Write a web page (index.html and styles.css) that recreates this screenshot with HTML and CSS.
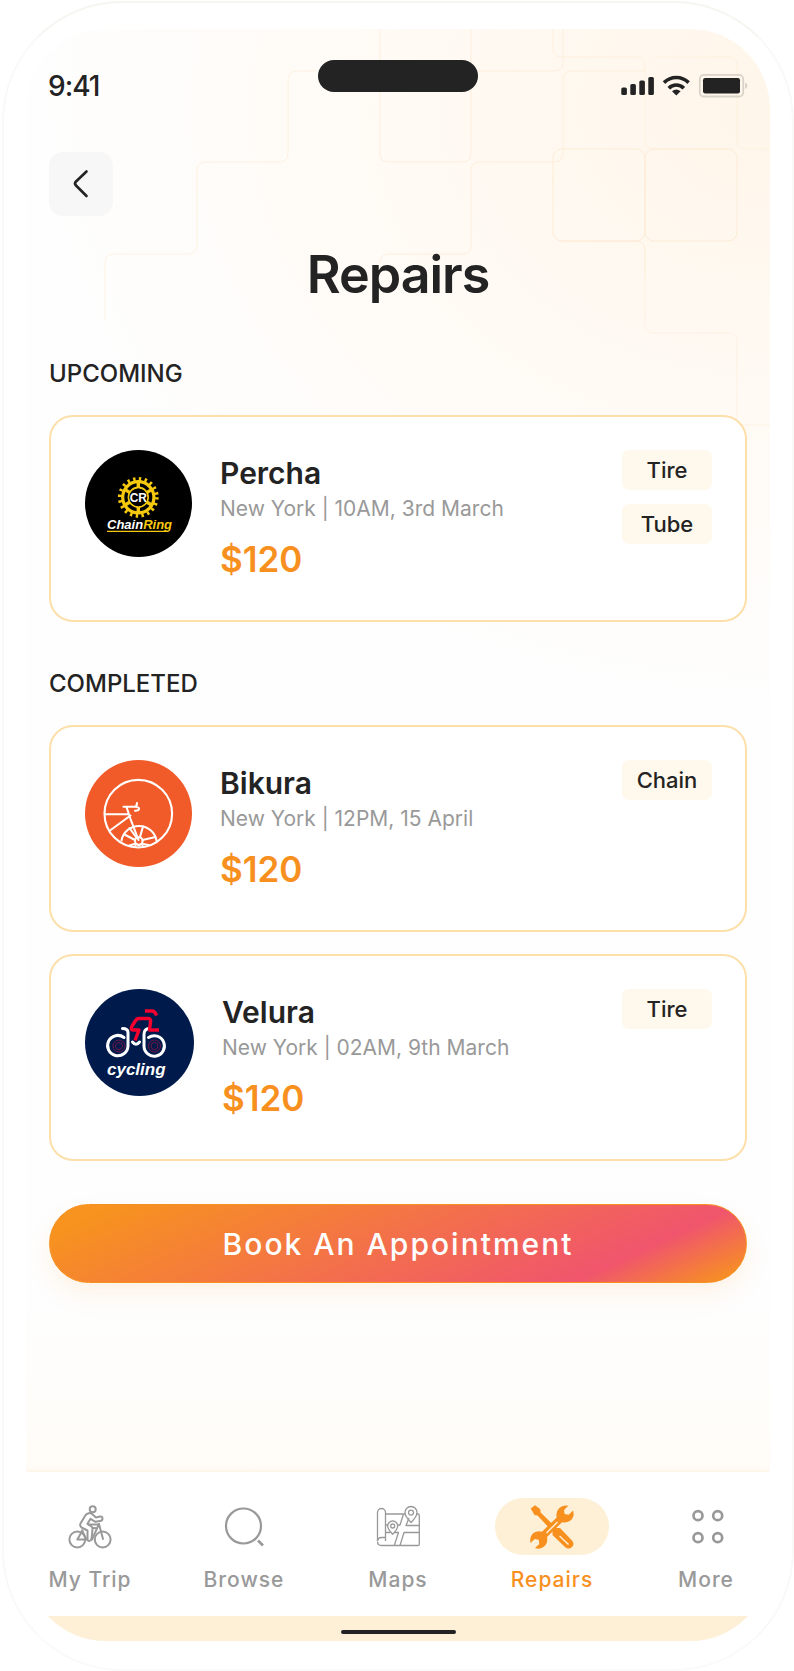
FILE: index.html
```
<!DOCTYPE html>
<html lang="en">

<head>
    <meta charset="UTF-8">
    <meta name="viewport" content="width=device-width, initial-scale=1.0">
    <title>Repairs</title>
    <link rel="stylesheet" href="styles.css">
</head>

<body>
    <div class="phone">
        <div class="screen">
            <!-- background pattern -->
            <svg class="pattern" width="744" height="420" viewBox="26 29 744 420" fill="none" stroke="#fdecd6">
                <path opacity=".7" d="M316 71H297q-9 0-9 9V153q0 9-9 9H206q-9 0-9 9V245q0 9-9 9H114q-9 0-9 9V320" />
                <path d="M380 29V153q0 9 9 9H462q9 0 9-9V29M476 71H554q9 0 9-9V29" opacity=".8" />
                <path d="M471 245V171q0-9 9-9H554q9 0 9-9V80q0-9 9-9H645M471 245q0 9-9 9H389q-9 0-9 9" opacity=".8" />
                <rect x="553" y="149" width="92" height="92" rx="9" />
                <rect x="645" y="149" width="92" height="92" rx="9" />
                <path d="M553 29V48q0 9 9 9H636q9 0 9 9V140q0 9 9 9H728M654 57H728q9 0 9 9V140q0 9 9 9H770" opacity=".7" />
                <path d="M562 241H636q9 0 9 9V278" />
                <path d="M645 278V324q0 9 9 9H728q9 0 9 9V416q0 9 9 9H770" opacity=".5" />
            </svg>

            <header class="status">
                <span class="time">9:41</span>
                <span class="notch"></span>
                <svg class="signals" width="128" height="26" viewBox="0 0 128 26" fill="#232323">
                    <rect x="1.3" y="14.5" width="5.6" height="7.5" rx="1.6" />
                    <rect x="10.3" y="11" width="5.6" height="11" rx="1.6" />
                    <rect x="19.3" y="7.5" width="5.6" height="14.5" rx="1.6" />
                    <rect x="28.3" y="4" width="5.6" height="18" rx="1.6" />
                    <path d="M44 9.6a17.5 17.5 0 0 1 24.6 0M48.8 15.2a10.4 10.4 0 0 1 15 0" fill="none" stroke="#232323" stroke-width="3.6" />
                    <path d="M52 18.2q4.3-3.4 8.6 0l-4.3 4.4z" />
                    <rect x="79.8" y="1.9" width="43.4" height="21.6" rx="4" fill="none" stroke="#d9d4ca" stroke-width="1.8" />
                    <path d="M125 9.5q2.4.8 2.4 3.2t-2.4 3.2z" fill="#d9d4ca" />
                    <rect x="83" y="5" width="37" height="15.4" rx="2.2" />
                </svg>
            </header>

            <main>
                <button type="button" class="back" aria-label="Back">
                    <svg width="64" height="64" viewBox="0 0 64 64" fill="none" stroke="#232323" stroke-width="2.6" stroke-linecap="round">
                        <path d="M37.5 19.5L27 29.500q-2 2 0 4l10.500 10.500" />
                    </svg>
                </button>

                <h1>Repairs</h1>

                <section>
                    <h2>UPCOMING</h2>
                    <article class="card">
                        <svg class="logo" viewBox="0 0 107 107">
                            <circle cx="53.5" cy="53.5" r="53.5" fill="#000" />
                            <g fill="none" stroke="#f6c90e">
                                <circle cx="53.3" cy="47.3" r="18.4" stroke-width="4" stroke-dasharray="2.4 3.38" />
                                <circle cx="53.3" cy="47.3" r="15.6" stroke-width="3.2" />
                                <circle cx="53.3" cy="47.3" r="9.8" stroke-width="1.8" />
                                <path stroke-width="3.4" d="M53.3 32v6M53.3 57v6M40 39.6l5 3M66.6 39.6l-5 3M40 55l5-3M66.6 55l-5-3" />
                            </g>
                            <circle cx="53.3" cy="47.3" r="8.9" fill="#000" />
                            <text class="cr" x="53.3" y="51.5">CR</text>
                            <text class="chainring" x="22" y="79"><tspan fill="#fff">Chain</tspan><tspan fill="#f6c90e">Ring</tspan></text>
                            <path d="M22 81.4H83" stroke="#f6c90e" stroke-width="1.4" />
                        </svg>
                        <div class="info">
                            <h3>Percha</h3>
                            <p class="when">New York | 10AM, 3rd March</p>
                            <p class="price">$120</p>
                        </div>
                        <ul class="tags">
                            <li>Tire</li>
                            <li>Tube</li>
                        </ul>
                    </article>
                </section>

                <section>
                    <h2>COMPLETED</h2>
                    <article class="card">
                        <svg class="logo" viewBox="0 0 107 107">
                            <circle cx="53.5" cy="53.5" r="53.5" fill="#f15a29" />
                            <g fill="none" stroke="#fff" stroke-width="2.1" stroke-linecap="round" stroke-linejoin="round">
                                <circle cx="53.3" cy="53.7" r="33.8" />
                                <path d="M20 54.3H44M25 70.5L45.5 55.5M41.5 47l4 12 8 21" />
                                <path d="M38.5 46.8H49.5q2.5 0 2.5-3.8M49.5 46.8q4.5 0 4.5 2t-4 2" />
                                <path d="M36.5 80.5a17.8 17.8 0 0 1 35 0" />
                                <circle cx="53.8" cy="81" r="3.8" />
                                <path d="M55 77L58 66.5M51 77L44.5 68M50 80L39.5 74.5M57.5 80L70.5 77M58 84l6 1M49.5 84l-5 1.5" />
                                <path d="M50 86l2-2 2 2 2-2 2 2" stroke-width="1.4" />
                            </g>
                        </svg>
                        <div class="info">
                            <h3>Bikura</h3>
                            <p class="when">New York | 12PM, 15 April</p>
                            <p class="price">$120</p>
                        </div>
                        <ul class="tags">
                            <li>Chain</li>
                        </ul>
                    </article>

                    <article class="card">
                        <svg class="logo logo-wide" viewBox="0 0 109 107">
                            <ellipse cx="54.5" cy="53.5" rx="54.5" ry="53.5" fill="#001a4b" />
                            <g fill="none" stroke="#7a1745" stroke-width=".9">
                                <circle cx="34" cy="57" r="6" />
                                <circle cx="34" cy="57" r="3.5" />
                                <circle cx="69.5" cy="57" r="6" />
                                <circle cx="69.5" cy="57" r="3.5" />
                            </g>
                            <g fill="none" stroke="#fff" stroke-width="3" stroke-linecap="round">
                                <path d="M39 48.5a10.2 10.2 0 1 0 4 8.500V43.500q0-4-5.500-4" />
                                <path d="M64.500 39.500q-5.500 0-5.500 6V57a10.200 10.200 0 1 0 4.500-8.500" />
                                <path d="M47.500 53q3.500 4.500 7 0" />
                            </g>
                            <g fill="none" stroke="#f5002f" stroke-width="3.4" stroke-linejoin="round">
                                <path d="M50 51.500L54 41H48q-3-.5-1-4l4-6q1-1.500 3-1.500H63q3 0 2.600 3L64.500 41H74" />
                                <path d="M60 22h7q3 0 4.500 4.500" />
                            </g>
                            <text class="cycling" x="22" y="86">cycling</text>
                        </svg>
                        <div class="info">
                            <h3>Velura</h3>
                            <p class="when">New York | 02AM, 9th March</p>
                            <p class="price">$120</p>
                        </div>
                        <ul class="tags">
                            <li>Tire</li>
                        </ul>
                    </article>
                </section>

                <button type="button" class="book">Book An Appointment</button>
            </main>

            <nav class="tabs">
                <a href="#">
                    <span class="icon">
                        <svg width="44" height="44" viewBox="0 0 44 44" fill="none" stroke="#999" stroke-width="2" stroke-linecap="round" stroke-linejoin="round">
                            <circle cx="9.3" cy="34.5" r="7.9" />
                            <circle cx="34.7" cy="34.5" r="7.9" />
                            <circle cx="24.7" cy="4.2" r="3" />
                            <path d="M20 8.500q2-1 4 .5l4 3.500 4-1q2.500-.3 2.500 2t-2.500 2.500l-4.500.8-5-3-3 5 4 2.700q1.200 1 1 3L23.500 34q-.5 2-2.300 2t-1.700-2.500V25.500l-6-3q-2-1.500-1-4l4.500-7.500q1-2 3-2.500z" />
                            <path d="M14.5 25.5L9.3 34.5H19M14 25.5l4 8M24 34.5L31 19M31 19l4 15M20.5 19.5H30M25 23l4 .2" />
                        </svg>
                    </span>
                    My Trip
                </a>
                <a href="#">
                    <span class="icon">
                        <svg width="44" height="44" viewBox="0 0 44 44" fill="none" stroke="#999" stroke-width="2.2">
                            <circle cx="21.5" cy="21" r="17.5" />
                            <path d="M36 35.5L41 40.500" stroke-width="2.6" />
                        </svg>
                    </span>
                    Browse
                </a>
                <a href="#">
                    <span class="icon">
                        <svg width="44" height="44" viewBox="0 0 44 44" fill="none" stroke="#999" stroke-width="1.3" stroke-linejoin="round">
                            <path d="M1.5 36V7.5a4 4 0 0 1 8 0V36M1.500 36.500q0 4 4 4H42q1.300 0 1.300-1.300V10.500q0-1.500-1.500-1.500H40" />
                            <path d="M1.500 36q.5-3.500 4-3.500h4M9.500 9H29.500M9.500 20H12M21.300 20H24L27.500 9M9.500 27.500H14.500M18.500 27.500H22.500L18.300 40.500M24 40.500L28 27.500H43.300M43.300 20.500H30L33 13" />
                            <path d="M16.700 29.200q-5-5-5-8.200a5 5 0 0 1 10 0q0 3.200-5 8.200zM35 17.500q-6-6-6-10a6 6 0 0 1 12 0q0 4-6 10z" />
                            <circle cx="16.7" cy="21" r="2" />
                            <circle cx="35" cy="7.6" r="2.5" />
                        </svg>
                    </span>
                    Maps
                </a>
                <a href="#" class="active">
                    <span class="icon">
                        <svg width="44" height="44" viewBox="0 0 44 44">
                            <path fill="#f7901e" d="M.7 3.5L5 .2l5.3 4 .3 3.2L26.5 23l3.500 0L42 35.500q3 3.500 0 6.500-3.500 3-7 0L22.500 30V26.500L7.500 10.500 4.500 10z" />
                            <path stroke="#fef0d6" stroke-width="1.4" d="M29.5 31L38.5 39.5" />
                            <path fill="#f7901e" d="M38.300.8L34 5l.6 4 4 .8 4.500-4.300q1.800 6.500-2.600 10-4 3-8.500 1.700L17 32q1.200 5-2 8.800-4 4.200-10 2.300L9.300 39l-.6-4.300-4-.7L.5 38Q-.8 31.500 3.500 28q3.500-2.600 8.500-1.300L26.700 12.500Q25.500 7 29 3.300 33-.6 38.300.8z" />
                            <path stroke="#fef0d6" stroke-width="1.4" d="M16.5 28L27.5 17" />
                        </svg>
                    </span>
                    Repairs
                </a>
                <a href="#">
                    <span class="icon">
                        <svg width="44" height="44" viewBox="0 0 44 44" fill="none" stroke="#999" stroke-width="2.7">
                            <circle cx="14" cy="10.7" r="4.5" />
                            <circle cx="33.7" cy="10.7" r="4.5" />
                            <circle cx="14" cy="32.7" r="4.5" />
                            <circle cx="33.7" cy="32.7" r="4.5" />
                        </svg>
                    </span>
                    More
                </a>
            </nav>
            <footer class="home"><span></span></footer>
        </div>
    </div>
</body>

</html>
```
FILE: styles.css
```
* {
    box-sizing: border-box;
    margin: 0;
    padding: 0;
}

body {
    background: #fff;
    color: #232323;
    font-family: Inter, "Liberation Sans", sans-serif;
}

/* phone */
.phone {
    display: flex;
    min-height: calc(100vh - 1px);
    margin: 1px 0 0 2px;
    padding: 26px 22px 28px;
    border: 2px solid;
    border-color: #f5f5f1 #f9f9f8 #fafafa;
    border-radius: 120px;
}

.screen {
    position: relative;
    flex: 1;
    display: flex;
    flex-direction: column;
    border-radius: 80px;
    overflow: hidden;
    background:
        linear-gradient(to top, #fffcf7 170px, rgba(255, 255, 255, 0) 340px),
        radial-gradient(ellipse 740px 600px at 100% 80px, #fff6ea, #fffaf4 50%, #fefefe);
}

.pattern {
    position: absolute;
    top: 0;
    right: 0;
}

.status {
    position: relative;
    display: grid;
    grid-template-columns: 1fr auto 1fr;
    align-items: center;
    margin-top: 31px;
    padding: 0 22px;
}

.time {
    font-size: 28px;
    font-weight: 500;
    line-height: 52px;
    letter-spacing: -1px;
}

.notch {
    align-self: start;
    width: 160px;
    height: 32px;
    border-radius: 16px;
    background: #232323;
}

.signals {
    justify-self: end;
}

main {
    position: relative;
    flex: 1;
    padding: 40px 23px 60px;
}

.back {
    display: block;
    width: 64px;
    height: 64px;
    border: none;
    border-radius: 14px;
    background: #f7f7f7;
}

h1 {
    margin-top: 29px;
    margin-bottom: 53px;
    font-size: 52px;
    font-weight: 600;
    line-height: 60px;
    letter-spacing: -1px;
    text-align: center;
}

h2 {
    font-size: 24px;
    font-weight: 500;
    line-height: 32px;
    margin-bottom: 25px;
}

section + section {
    margin-top: 46px;
}

/* cards */
.card {
    display: flex;
    align-items: flex-start;
    padding: 33px 33px 39px 34px;
    border: 2px solid #fddfaa;
    border-radius: 24px;
    background: #fff;
}

.card + .card {
    margin-top: 22px;
}

.logo {
    flex: none;
    width: 107px;
    height: 107px;
    margin-right: 28px;
}

.logo-wide {
    width: 109px;
}

.cr {
    font: bold 12px "Liberation Sans", sans-serif;
    fill: #fff;
    text-anchor: middle;
}

.chainring {
    font: italic bold 13px "Liberation Sans", sans-serif;
}

.cycling {
    font: italic bold 17px "Liberation Sans", sans-serif;
    fill: #fff;
}

.info {
    flex: 1;
    padding-top: 5px;
}

h3 {
    font-size: 30px;
    font-weight: 600;
    line-height: 36px;
}

.when {
    margin-top: 3px;
    font-size: 21px;
    font-weight: 400;
    line-height: 30px;
    color: #999;
}

.price {
    margin-top: 13px;
    font-size: 35px;
    font-weight: 600;
    line-height: 44px;
    color: #f7901e;
}

.tags {
    display: grid;
    gap: 14px;
    list-style: none;
}

.tags li {
    width: 90px;
    border-radius: 7px;
    background: #fff8ec;
    font-size: 22px;
    font-weight: 500;
    line-height: 40px;
    text-align: center;
}

.book {
    display: block;
    width: 100%;
    height: 79px;
    margin-top: 43px;
    border: 1px solid #f7901e;
    border-radius: 40px;
    background: linear-gradient(155deg, #f7931e 7%, #f0556d 80%, #f7931e 98%);
    box-shadow: 0 12px 24px rgba(247, 144, 30, 0.1);
    color: #fff;
    font-family: inherit;
    font-size: 30px;
    font-weight: 500;
    letter-spacing: 2px;
}

/* bottom tabs */
.tabs {
    position: relative;
    display: flex;
    justify-content: space-between;
    padding: 26px 7px 22px;
    background: #fff;
    box-shadow: 0 -1px 4px rgba(247, 144, 30, 0.1);
}

.tabs a {
    width: 114px;
    color: #999;
    font-size: 21px;
    font-weight: 500;
    line-height: 28px;
    letter-spacing: 1px;
    text-align: center;
    text-decoration: none;
}

.icon {
    display: flex;
    align-items: center;
    justify-content: center;
    height: 57px;
    margin-bottom: 11px;
    border-radius: 29px;
}

.tabs .active {
    color: #f7901e;
}

.active .icon {
    background: #fef0d6;
}

.home {
    position: relative;
    height: 25px;
    padding-top: 14px;
    background: #fef0d6;
}

.home span {
    display: block;
    width: 115px;
    height: 4px;
    margin: auto;
    border-radius: 2px;
    background: #232323;
}
```
